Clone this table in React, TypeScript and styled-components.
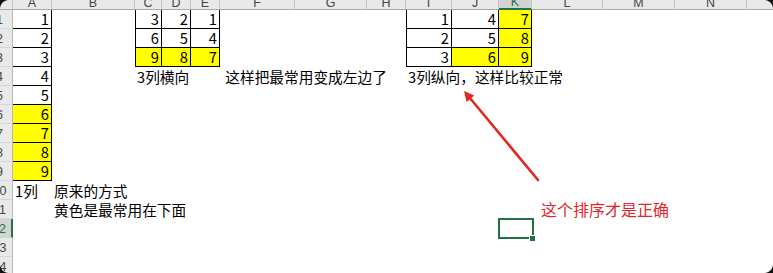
import React from 'react';
import styled, { createGlobalStyle, css } from 'styled-components';

const GlobalStyle = createGlobalStyle`
  html, body { margin: 0; padding: 0; background: #fff; }
  body { font-family: "Noto Sans CJK SC", "Liberation Sans", sans-serif; }
`;

const COLS: { id: string; w: number }[] = [
  { id: 'A', w: 39 },
  { id: 'B', w: 83 },
  { id: 'C', w: 27 },
  { id: 'D', w: 29 },
  { id: 'E', w: 29 },
  { id: 'F', w: 75 },
  { id: 'G', w: 72 },
  { id: 'H', w: 39 },
  { id: 'I', w: 46 },
  { id: 'J', w: 47 },
  { id: 'K', w: 33 },
  { id: 'L', w: 71 },
  { id: 'M', w: 72 },
  { id: 'N', w: 72 },
  { id: 'O', w: 72 },
];

type CellDef = {
  v?: string;
  num?: boolean;
  fill?: boolean;
  box?: boolean;
  left?: boolean;
  sel?: boolean;
};

const ACTIVE_COL = 'K';
const ACTIVE_ROW = 12;

const num = (v: string, extra: Partial<CellDef> = {}): CellDef => ({ v, num: true, box: true, ...extra });

const DATA: Record<number, Record<string, CellDef>> = {
  1: {
    A: num('1'),
    C: num('3', { left: true }), D: num('2'), E: num('1'),
    I: num('1', { left: true }), J: num('4'), K: num('7', { fill: true }),
  },
  2: {
    A: num('2'),
    C: num('6', { left: true }), D: num('5'), E: num('4'),
    I: num('2', { left: true }), J: num('5'), K: num('8', { fill: true }),
  },
  3: {
    A: num('3'),
    C: num('9', { left: true, fill: true }), D: num('8', { fill: true }), E: num('7', { fill: true }),
    I: num('3', { left: true }), J: num('6', { fill: true }), K: num('9', { fill: true }),
  },
  4: {
    A: num('4'),
    C: { v: '3列横向' },
    F: { v: ' 这样把最常用变成左边了' },
    I: { v: '3列纵向，这样比较正常' },
  },
  5: { A: num('5') },
  6: { A: num('6', { fill: true }) },
  7: { A: num('7', { fill: true }) },
  8: { A: num('8', { fill: true }) },
  9: { A: num('9', { fill: true }) },
  10: { A: { v: '1列' }, B: { v: '原来的方式' } },
  11: { B: { v: '黄色是最常用在下面' } },
  12: { K: { sel: true } },
  13: {},
  14: {},
};

const GREEN = '#217346';

const Viewport = styled.div`
  position: relative;
  width: 773px;
  height: 273px;
  overflow: hidden;
  background: #fff;
`;

const Sheet = styled.div`
  display: grid;
  grid-template-columns: 26px ${COLS.map((c) => `${c.w}px`).join(' ')};
  grid-template-rows: 17px repeat(14, 19px);
  margin: -7px 0 0 -13px;
  width: max-content;
`;

const HeaderCorner = styled.div`
  background: #e9e9e9;
  border-right: 1px solid #c4c4c4;
  border-bottom: 1px solid #a9a9a9;
`;

const ColHeader = styled.div<{ $active?: boolean }>`
  display: flex;
  align-items: flex-end;
  justify-content: center;
  background: ${(p) => (p.$active ? '#d3d3d3' : '#e9e9e9')};
  color: ${(p) => (p.$active ? GREEN : '#444')};
  border-right: 1px solid #c4c4c4;
  border-bottom: ${(p) => (p.$active ? `2px solid ${GREEN}` : '1px solid #a9a9a9')};
  font: 12.5px/1 "Liberation Sans", sans-serif;
`;

const RowHeader = styled.div<{ $active?: boolean }>`
  display: flex;
  align-items: center;
  justify-content: center;
  background: ${(p) => (p.$active ? '#d3d3d3' : '#e9e9e9')};
  color: ${(p) => (p.$active ? GREEN : '#444')};
  border-right: ${(p) => (p.$active ? `2px solid ${GREEN}` : '1px solid #b9b9b9')};
  border-bottom: 1px solid #d5d5d5;
  font: 12.5px/1 "Liberation Sans", sans-serif;
  padding-top: 2px;
`;

const Cell = styled.div<{ $num?: boolean; $fill?: boolean; $box?: boolean; $left?: boolean; $sel?: boolean }>`
  position: relative;
  display: flex;
  align-items: flex-end;
  justify-content: ${(p) => (p.$num ? 'flex-end' : 'flex-start')};
  padding: 0 2px 1px 2px;
  font-size: 14.7px;
  line-height: 17px;
  color: #000;
  white-space: pre;
  background: ${(p) => (p.$fill ? '#ffff00' : 'transparent')};
  ${(p) =>
    p.$box &&
    css`
      border-right: 1px solid #000;
      border-bottom: 1px solid #000;
    `}
  ${(p) =>
    p.$left &&
    css`
      border-left: 1px solid #000;
    `}
  ${(p) =>
    p.$sel &&
    css`
      &::before {
        content: '';
        position: absolute;
        top: -1px;
        left: -1px;
        right: -2px;
        bottom: -1px;
        border: 2px solid ${GREEN};
      }
      &::after {
        content: '';
        position: absolute;
        right: -4px;
        bottom: -4px;
        width: 5px;
        height: 5px;
        background: ${GREEN};
        border: 1px solid #fff;
      }
    `}
`;

const Note = styled.div`
  position: absolute;
  left: 541px;
  top: 199px;
  font-size: 16px;
  line-height: 20px;
  color: #e3262a;
  white-space: nowrap;
`;

const Overlay = styled.svg`
  position: absolute;
  left: 0;
  top: 0;
  pointer-events: none;
`;

const WindowCorner = styled.div<{ $pos: 'tl' | 'tr' | 'bl' | 'br' }>`
  position: absolute;
  width: 9px;
  height: 9px;
  ${(p) => (p.$pos[0] === 't' ? 'top: 0;' : 'bottom: 0;')}
  ${(p) => (p.$pos[1] === 'l' ? 'left: 0;' : 'right: 0;')}
  background: radial-gradient(
    circle at ${(p) => (p.$pos[1] === 'l' ? '100%' : '0')} ${(p) => (p.$pos[0] === 't' ? '100%' : '0')},
    transparent 8.5px,
    #111 9.5px
  );
`;

export default function App() {
  const rows = Array.from({ length: 14 }, (_, i) => i + 1);
  return (
    <>
      <GlobalStyle />
      <Viewport>
        <Sheet>
          <HeaderCorner />
          {COLS.map((c) => (
            <ColHeader key={c.id} $active={c.id === ACTIVE_COL}>
              {c.id}
            </ColHeader>
          ))}
          {rows.map((r) => (
            <React.Fragment key={r}>
              <RowHeader $active={r === ACTIVE_ROW}>{r}</RowHeader>
              {COLS.map((c) => {
                const d = DATA[r]?.[c.id] ?? {};
                return (
                  <Cell
                    key={c.id}
                    $num={d.num}
                    $fill={d.fill}
                    $box={d.box}
                    $left={d.left}
                    $sel={d.sel}
                  >
                    {d.v}
                  </Cell>
                );
              })}
            </React.Fragment>
          ))}
        </Sheet>
        <Overlay width="773" height="273" viewBox="0 0 773 273">
          <line x1="538" y1="180" x2="469.5" y2="97.5" stroke="#e5261e" strokeWidth="2.6" strokeLinecap="round" />
          <polygon points="464,91 474.2,95.6 466.6,101.9" fill="#e5261e" />
        </Overlay>
        <Note>这个排序才是正确</Note>
        <WindowCorner $pos="tl" />
        <WindowCorner $pos="tr" />
        <WindowCorner $pos="bl" />
        <WindowCorner $pos="br" />
      </Viewport>
    </>
  );
}
